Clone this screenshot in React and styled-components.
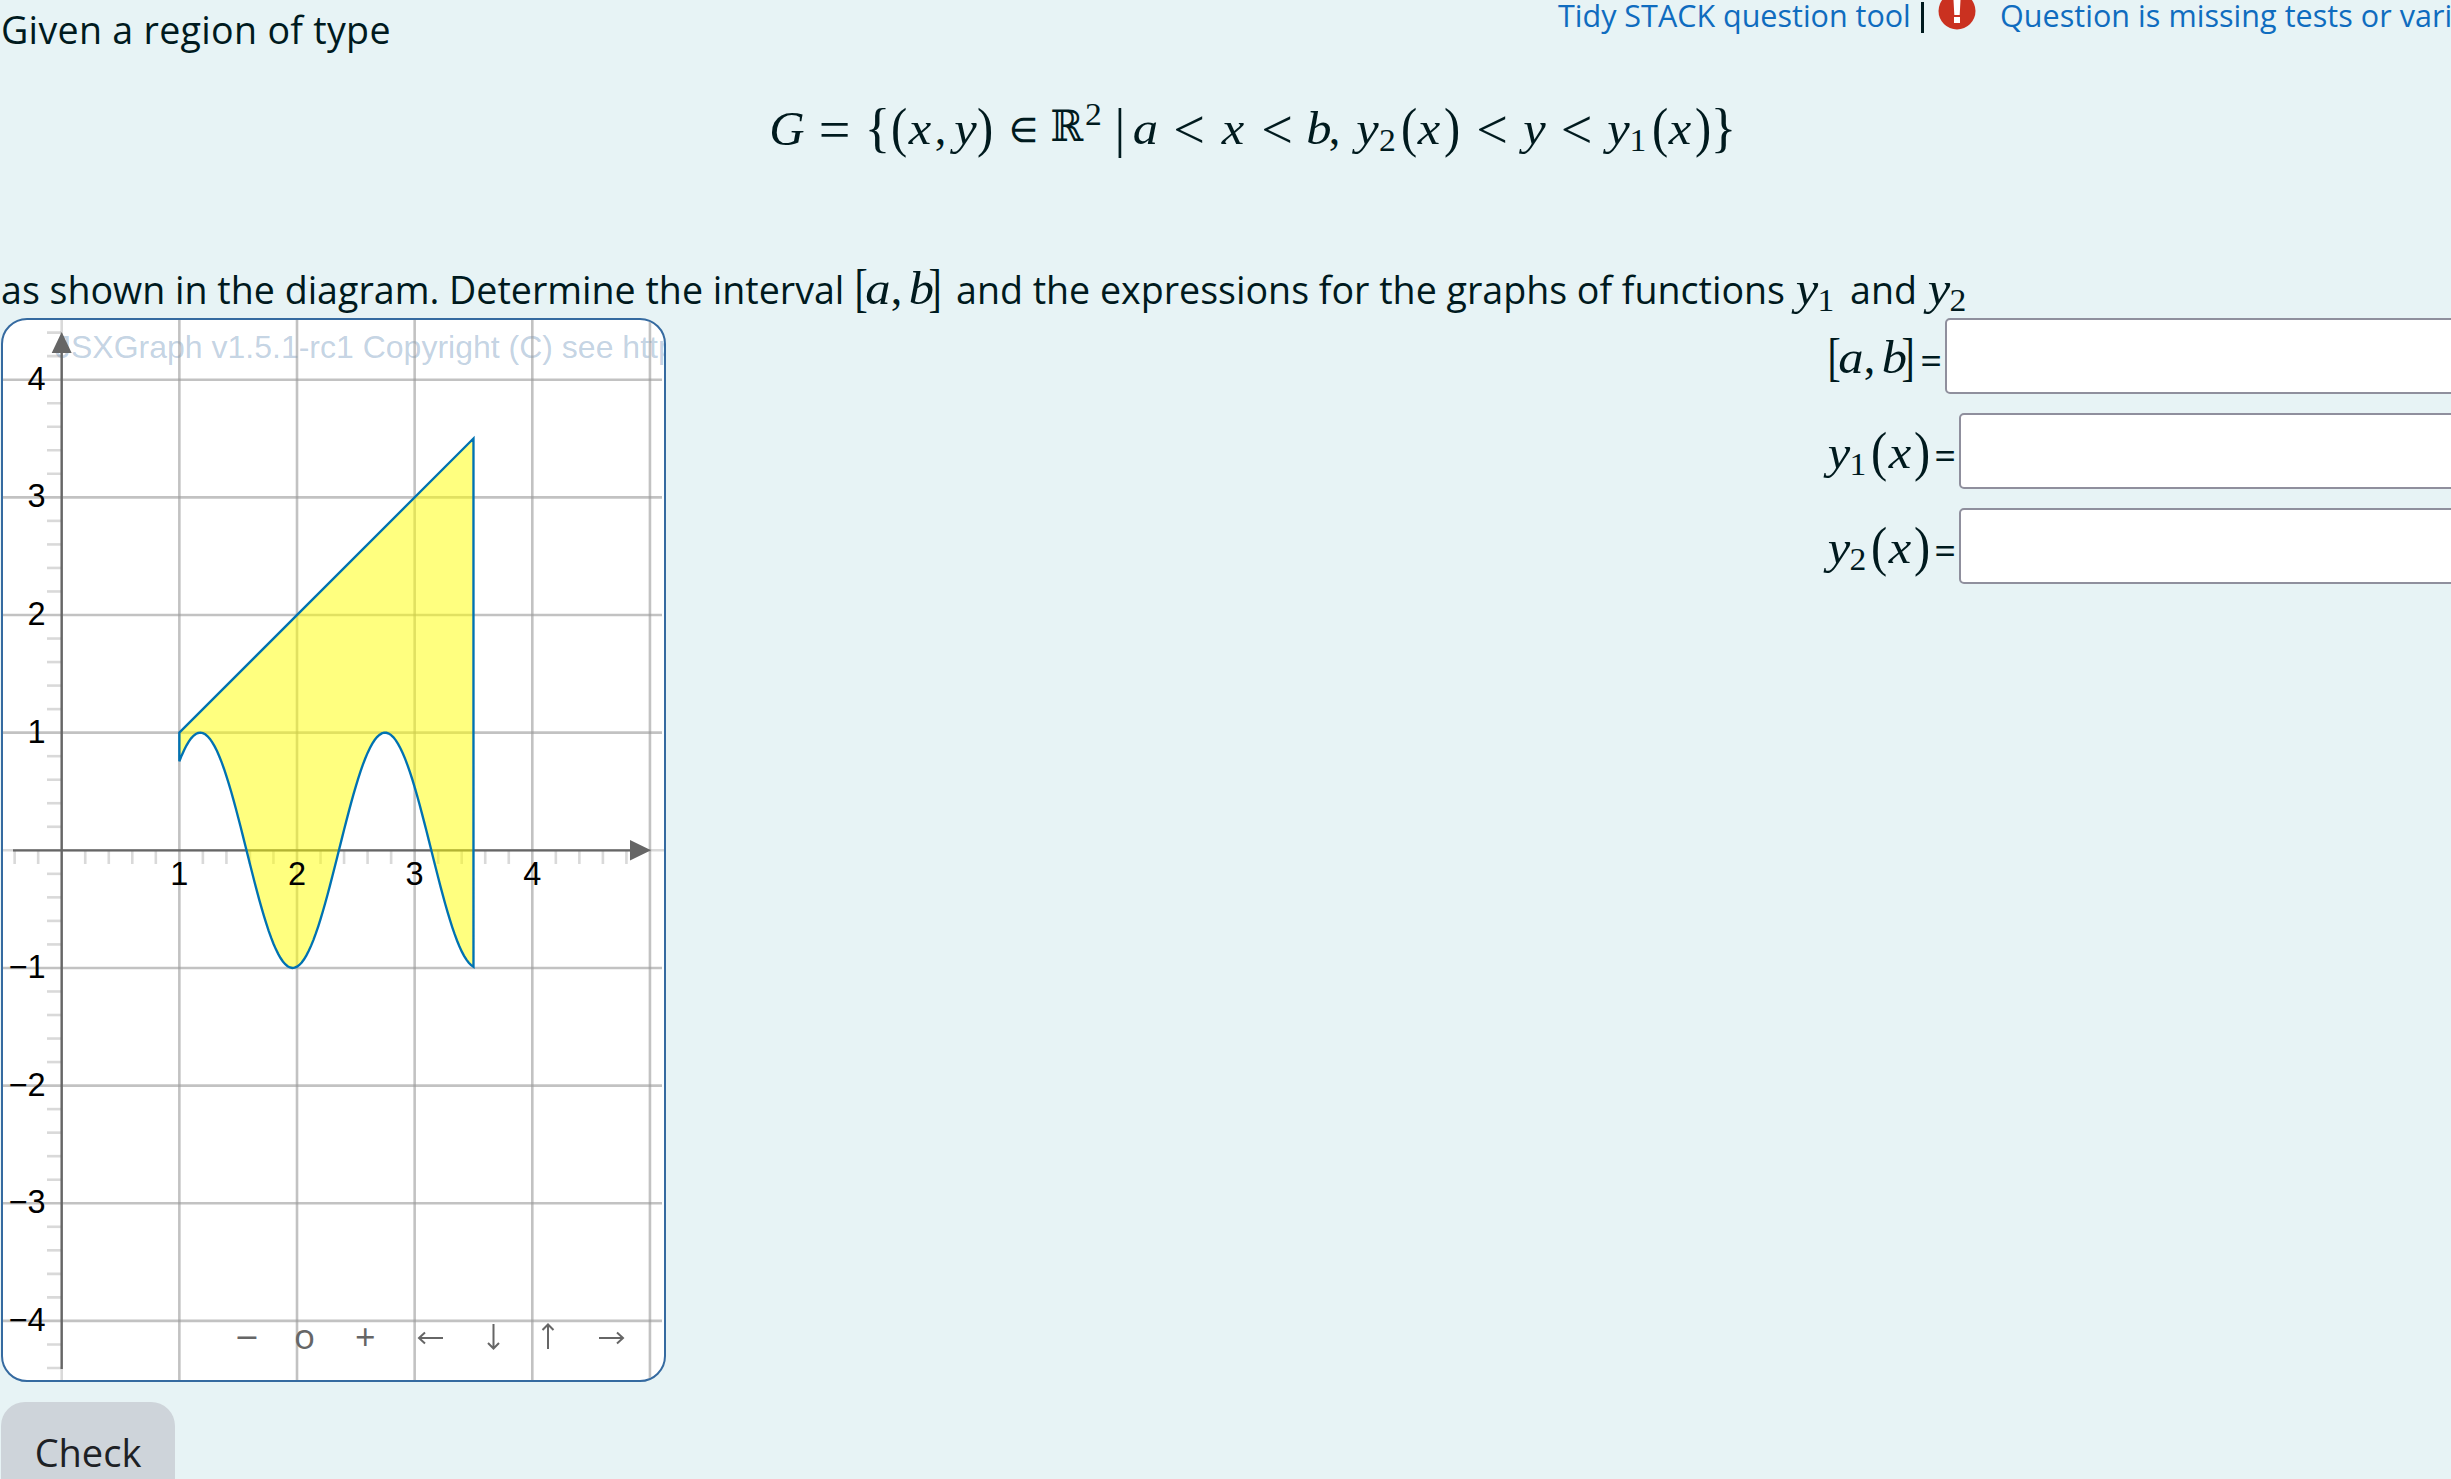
import React from "react";
import styled, { createGlobalStyle } from "styled-components";

const Global = createGlobalStyle`
  html, body { margin: 0; height: 1479px; overflow: hidden; background: #e7f3f5; }
  * { box-sizing: border-box; }
`;
const UI = `"Open Sans", "Noto Sans", sans-serif`;

const Page = styled.main`
  width: 2451px; height: 1479px; overflow: hidden; display: flex; flex-direction: column;
  background: #e7f3f5; color: #001a1e; font-family: ${UI}; font-size: 37.6px;
`;
const TopRow = styled.div`
  display: flex; justify-content: space-between; height: 99px; flex: none;
`;
const Text = styled.span`
  display: block; white-space: nowrap; width: ${p => p.$w}px; margin-left: ${p => p.$gap || 0}px;
  margin-top: ${p => p.$top || 0}px;
  font-size: 37.6px; line-height: 56px; letter-spacing: ${p => p.$ls || 0}px;
`;
const Tools = styled.div`
  display: flex; width: 893px; height: 44px; font-size: 30.5px; line-height: 30px; white-space: nowrap;
`;
const Link = styled.a`
  color: #0f6cbf; width: ${p => p.$w}px; letter-spacing: ${p => p.$ls}px; flex: none;
`;
const Bar = styled.span`width: 2.5px; height: 31px; margin: 2px 14.5px 0 10px; background: #001a1e; flex: none;`;
const Warn = styled.svg`width: 38px; height: 38px; margin: -8px 24px 0 0; flex: none;`;

const Formula = styled.div`
  display: flex; height: 80px; flex: none; margin-left: 770px; line-height: 60px;
`;
const Prompt = styled.div`
  display: flex; height: 56px; flex: none; margin-top: 83px; padding-left: 1px;
`;
const MathBox = styled.span`display: flex; flex: none; line-height: 60px; margin-left: ${p => p.$gap || 0}px; margin-top: ${p => p.$top || 0}px;`;
const Glyph = styled.span`
  display: flex; justify-content: center; flex: none; white-space: nowrap; height: 60px;
  width: ${p => p.$w}px; margin-left: ${p => p.$gap}px;
  font-family: ${p => (p.$font ? p.$font + "," : "")} "Liberation Serif", serif;
  font-style: ${p => (p.$italic ? "italic" : "normal")};
  font-size: ${p => p.$size}px;
  transform: translateY(${p => p.$dy}px) scaleX(${p => p.$sx || 1});
`;
const KINDS = {
  v: { $size: 46, $italic: true, $dy: 0, $sx: 1.1 },
  G: { $size: 48, $italic: true, $dy: 0, $sx: 1.02 },
  p: { $size: 54, $dy: -1, $sx: 0.9 },
  b: { $size: 54, $dy: -1 },
  k: { $size: 53, $dy: -1, $sx: 0.75 },
  o: { $size: 54, $dy: 1, $sx: 1.04 },
  c: { $size: 46, $dy: 0 },
  sub: { $size: 32, $dy: 11, $sx: 1.05 },
  sup: { $size: 32, $dy: -15, $sx: 1.05 },
  R: { $size: 43, $dy: 0, $sx: 0.92, $font: `"DejaVu Math TeX Gyre", "DejaVu Serif"` },
  e: { $size: 40, $dy: 0, $sx: 0.9, $font: `"DejaVu Math TeX Gyre", "DejaVu Serif"` },
};
const Tex = ({ items, gap, top }) => (
  <MathBox $gap={gap} $top={top}>
    {items.map(([ch, kind, g, w], i) => <Glyph key={i} $gap={g} $w={w} {...KINDS[kind]}>{ch}</Glyph>)}
  </MathBox>
);
const SET = [
  ["G", "G", 0, 34], ["=", "o", 15, 31], ["{", "b", 19, 17], ["(", "p", 7, 12], ["x", "v", 3, 24],
  [",", "c", 5, 7], ["y", "v", 11, 21], [")", "p", 3, 12], ["∈", "e", 20, 25], ["ℝ", "R", 16, 32],
  ["2", "sup", 2, 15], ["|", "b", 18, 2], ["a", "v", 14, 21], ["<", "o", 19, 28], ["x", "v", 18, 24],
  ["<", "o", 18, 28], ["b", "v", 18, 20], [",", "c", 2, 7], ["y", "v", 20, 19], ["2", "sub", 3, 15],
  ["(", "p", 8, 12], ["x", "v", 2, 24], [")", "p", 5, 12], ["<", "o", 20, 28], ["y", "v", 18, 21],
  ["<", "o", 17, 29], ["y", "v", 18, 19], ["1", "sub", 4, 12], ["(", "p", 10, 12], ["x", "v", 2, 24],
  [")", "p", 5, 12], ["}", "b", 6, 17],
];
const INTERVAL = [["[", "k", 0, 8], ["a", "v", 2, 22], [",", "c", 4, 7], ["b", "v", 12, 19], ["]", "k", 0, 8]];
const sub = n => [["y", "v", 0, 22], [n, "sub", 1, 14]];
const fn = n => [...sub(n), ["(", "p", 8, 12], ["x", "v", 3, 24], [")", "p", 4, 12]];

const Body = styled.div`display: flex; justify-content: space-between; align-items: flex-start; height: 1084px; flex: none;`;
const Board = styled.div`
  width: 665px; height: 1064px; margin-left: 1px; border: 2px solid #356aa0; border-radius: 26px;
  background: #fff; overflow: hidden; flex: none;
`;
const Chart = styled.svg`
  display: block; font-family: "Liberation Sans", Arial, sans-serif;
`;
const Answers = styled.div`display: flex; flex-direction: column; width: 625px; gap: 19.5px;`;
const Row = styled.label`display: flex; height: 75.5px; flex: none;`;
const Equals = styled.span`
  font-size: 38px; line-height: 76px; margin-left: ${p => p.$gap}px; margin-top: 3px; width: 22px; height: 70px;
  flex: none; display: flex; justify-content: center;
`;
const Field = styled.input`
  height: 75.5px; width: 700px; flex: none; border: 2px solid #8f8f9d; border-radius: 5px; background: #fff; margin: 0 0 0 3px;
`;
const Check = styled.button`
  width: 174px; height: 110px; margin-left: 1px; flex: none; border: 0; border-radius: 24px; background: #ced4da; color: #1d2125;
  font-family: ${UI}; font-size: 38px; padding: 0 0 10px; line-height: 56px;
`;

const OX = 61.7, OY = 850.3, U = 117.65;
const X = x => OX + x * U;
const Y = y => OY - y * U;
const wave = Array.from({ length: 126 }, (_, i) => {
  const x = 3.5 - i * 0.02;
  return `${X(x).toFixed(2)},${Y(-Math.sin(4 * x)).toFixed(2)}`;
});
const region = `${X(1)},${Y(1)} ${X(3.5)},${Y(3.5)} ${wave.join(" ")}`;
const range = (a, b) => Array.from({ length: b - a + 1 }, (_, i) => a + i);
const minor = (a, b) => range(a, b).filter(i => i % 5 !== 0);

function Graph() {
  return (
    <Chart width="661" height="1060" viewBox="3 320 661 1060">
      <text x="55" y="358" fontSize="32" fill="#356aa0" fillOpacity="0.3">JSXGraph v1.5.1-rc1 Copyright (C) see http://jsxgraph.org</text>
      <g stroke="#999" strokeOpacity="0.6" strokeWidth="2.6">
        {[1, 2, 3, 4, 5].map(i => <line key={i} x1={X(i)} x2={X(i)} y1="320" y2="1382" />)}
        {[-4, -3, -2, -1, 1, 2, 3, 4].map(i => <line key={i} y1={Y(i)} y2={Y(i)} x1="3" x2="662" />)}
      </g>
      <g stroke="#666" strokeOpacity="0.25" strokeWidth="2.6">
        <line x1={OX} x2={OX} y1="320" y2="1382" />
        <line x1="3" x2="664" y1={OY} y2={OY} />
        {minor(-22, 22).map(i => <line key={"y" + i} x1="47" x2="61" y1={Y(i / 5)} y2={Y(i / 5)} />)}
        {minor(-2, 24).map(i => <line key={"x" + i} y1={OY} y2="864" x1={X(i / 5)} x2={X(i / 5)} />)}
      </g>
      <g stroke="#666" strokeWidth="2.35" fill="#666">
        <line x1={OX} x2={OX} y1="350" y2="1369" />
        <line x1="13" x2="632" y1={OY} y2={OY} />
        <path stroke="none" d={`M${OX} 332 L71.7 353 H51.7Z M651 ${OY} L630 ${OY - 10.3} V${OY + 10.3}Z`} />
      </g>
      <polygon points={region} fill="#ffff00" fillOpacity="0.5" stroke="#0072b2" strokeWidth="2.35" strokeLinejoin="miter" />
      <g fontSize="32.5" fill="#000">
        {[1, 2, 3, 4].map(i => <text key={i} x={X(i)} y="884.7" textAnchor="middle">{i}</text>)}
        {[-4, -3, -2, -1, 1, 2, 3, 4].map(i => <text key={i} x="45.500" y={Y(i) + 10} textAnchor="end">{String(i).replace("-", "−")}</text>)}
      </g>
      <g fill="#666" textAnchor="middle" fontFamily="Open Sans">
        <text x="247" y="1352" fontSize="40">−</text>
        <text x="304.500" y="1348.500" fontSize="35">o</text>
        <text x="365.300" y="1350" fontSize="36">+</text>
      </g>
      <g stroke="#666" strokeWidth="2" fill="none">
        <path d="M443 1338H419M425 1332.5l-6 5.5 6 5.5M493.500 1324V1348M488 1343l5.500 5.500 5.500-5.500M548 1349V1325M542.500 1330l5.500-5.500 5.500 5.500M599 1338H623M617 1332.500l6 5.500-6 5.500" />
      </g>
    </Chart>
  );
}

export default function App() {
  return (
    <Page>
      <Global />
      <TopRow>
        <Text $w={500} $gap={1} $top={2} $ls={0.3}>Given a region of type</Text>
        <Tools>
          <Link $w={353} $ls={0}>Tidy STACK question tool</Link>
          <Bar />
          <Warn viewBox="0 0 38 38">
            <circle cx="19" cy="19" r="18.5" fill="#ca3120" />
            <path d="M15.500 8h7l-.8 15h-5.400zM16 25h6v6h-6z" fill="#fff" />
          </Warn>
          <Link $w={600} $ls={0.05}>Question is missing tests or variants.</Link>
        </Tools>
      </TopRow>
      <Formula><Tex items={SET} /></Formula>
      <Prompt>
        <Text $w={856}>as shown in the diagram. Determine the interval</Text>
        <Tex items={INTERVAL} top={-3} />
        <Text $w={827} $gap={17}>and the expressions for the graphs of functions</Text>
        <Tex items={sub("1")} gap={13} top={-3} />
        <Text $w={63} $gap={17}>and</Text>
        <Tex items={sub("2")} gap={15} top={-3} />
      </Prompt>
      <Body>
        <Board><Graph /></Board>
        <Answers>
          <Row><Tex items={INTERVAL} gap={4} top={10} /><Equals $gap={8}>=</Equals><Field /></Row>
          <Row><Tex items={fn("1")} gap={2} top={10} /><Equals $gap={6}>=</Equals><Field /></Row>
          <Row><Tex items={fn("2")} gap={2} top={10} /><Equals $gap={6}>=</Equals><Field /></Row>
        </Answers>
      </Body>
      <Check>Check</Check>
    </Page>
  );
}
